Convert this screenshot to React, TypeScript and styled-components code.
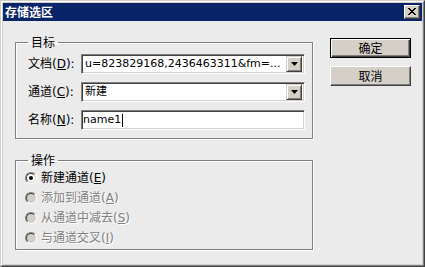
import React from "react";
import styled, { createGlobalStyle } from "styled-components";

const GlobalStyle = createGlobalStyle`
  html, body { margin: 0; padding: 0; background: #ebebeb; }
  body {
    font-family: "DejaVu Sans", "Noto Sans CJK SC", sans-serif;
    font-size: 12px;
    color: #000;
  }
  * { box-sizing: border-box; }
`;

const Window = styled.div`
  width: 425px;
  height: 267px;
  border: 1px solid;
  border-color: #d4d0c8 #404040 #404040 #d4d0c8;
  display: flex;
  flex-direction: column;
`;

const Frame = styled.div`
  flex: 1;
  display: flex;
  flex-direction: column;
  border: 1px solid;
  border-color: #fff #808080 #808080 #fff;
  padding: 1px;
  background: #d4d0c8;
`;

const TitleBar = styled.div`
  height: 18px;
  flex: none;
  background: #0a246a;
  display: flex;
  align-items: center;
  justify-content: space-between;
  padding: 0 2px 0 2px;
`;

const TitleText = styled.span`
  color: #fff;
  font-family: "Noto Sans CJK SC", sans-serif;
  font-weight: bold;
  font-size: 12px;
  line-height: 14px;
`;

const CloseButton = styled.div`
  width: 16px;
  height: 14px;
  background: #d4d0c8;
  border: 1px solid;
  border-color: #fff #404040 #404040 #fff;
  box-shadow: inset -1px -1px 0 #808080;
  display: flex;
  align-items: center;
  justify-content: center;
  padding-right: 1px;
  padding-bottom: 1px;
`;

const Body = styled.div`
  flex: 1;
  background: #ebebeb;
  display: flex;
  align-items: flex-start;
  gap: 17px;
  padding: 14px 11px 0 12px;
`;

const LeftColumn = styled.div`
  width: 298px;
  display: flex;
  flex-direction: column;
  gap: 14px;
`;

const Group = styled.fieldset<{ $pl: number; $pt: number; $pb: number; $pr: number }>`
  margin: 0;
  min-width: 0;
  border: 1px solid #808080;
  box-shadow: inset 1px 1px 0 #fff, 1px 1px 0 #fff;
  padding: ${(p) => `${p.$pt}px ${p.$pr}px ${p.$pb}px ${p.$pl}px`};
`;

const Legend = styled.legend<{ $ml: number }>`
  font-family: "Noto Sans CJK SC", sans-serif;
  font-size: 12px;
  line-height: 14px;
  padding: 0 3px;
  margin-left: ${(p) => p.$ml}px;
`;

const FieldRows = styled.div`
  display: flex;
  flex-direction: column;
  gap: 8px;
`;

const FieldRow = styled.div`
  display: flex;
  align-items: center;
  height: 20px;
`;

const Label = styled.span`
  width: 53px;
  flex: none;
  font-size: 12px;
  line-height: 14px;
  white-space: nowrap;
`;

const Sunken = styled.div<{ $pl: number }>`
  flex: 1;
  height: 20px;
  background: #fff;
  border: 1px solid;
  border-color: #808080 #fff #fff #808080;
  box-shadow: inset 1px 1px 0 #404040, inset -1px -1px 0 #d4d0c8;
  display: flex;
  align-items: center;
  padding: 2px 2px 2px ${(p) => p.$pl}px;
  font-size: 11px;
  line-height: 14px;
  white-space: nowrap;
  overflow: hidden;
`;

const ComboText = styled.span`
  flex: 1;
  overflow: hidden;
`;

const DropButton = styled.div`
  width: 16px;
  height: 16px;
  flex: none;
  background: #d4d0c8;
  border: 1px solid;
  border-color: #d4d0c8 #404040 #404040 #d4d0c8;
  box-shadow: inset 1px 1px 0 #fff, inset -1px -1px 0 #808080;
  display: flex;
  align-items: center;
  justify-content: center;
`;

const Caret = styled.span`
  display: inline-block;
  width: 1px;
  height: 13px;
  background: #000;
  margin-left: 1px;
`;

const RadioRow = styled.div<{ $disabled?: boolean }>`
  height: 20px;
  display: flex;
  align-items: center;
  gap: 4px;
  font-size: 12px;
  line-height: 14px;
  color: ${(p) => (p.$disabled ? "#808080" : "#000")};
  text-shadow: ${(p) => (p.$disabled ? "1px 1px 0 #fff" : "none")};
`;

const RadioOuter = styled.span`
  width: 12px;
  height: 12px;
  border-radius: 50%;
  border: 1px solid;
  border-color: #808080 #fff #fff #808080;
  display: flex;
  flex: none;
`;

const RadioInner = styled.span<{ $disabled?: boolean }>`
  width: 10px;
  height: 10px;
  border-radius: 50%;
  border: 1px solid;
  border-color: #404040 #d4d0c8 #d4d0c8 #404040;
  background: ${(p) => (p.$disabled ? "#d4d0c8" : "#fff")};
  display: flex;
  align-items: center;
  justify-content: center;
`;

const Dot = styled.span`
  width: 4px;
  height: 4px;
  border-radius: 50%;
  background: #000;
`;

const ButtonColumn = styled.div`
  width: 81px;
  padding-top: 3px;
  display: flex;
  flex-direction: column;
  gap: 8px;
`;

const Button = styled.div<{ $default?: boolean }>`
  height: 20px;
  background: #d4d0c8;
  border: 1px solid;
  border-color: ${(p) => (p.$default ? "#000" : "#fff #404040 #404040 #fff")};
  box-shadow: ${(p) =>
    p.$default
      ? "inset 1px 1px 0 #fff, inset -1px -1px 0 #404040, inset -2px -2px 0 #808080"
      : "inset -1px -1px 0 #808080"};
  display: flex;
  align-items: center;
  justify-content: center;
  font-family: "Noto Sans CJK SC", sans-serif;
  font-size: 12px;
  line-height: 14px;
`;

const Arrow = () => (
  <svg width="7" height="4" viewBox="0 0 7 4">
    <path d="M0 0h7L3.5 4z" fill="#000" />
  </svg>
);

const CloseIcon = () => (
  <svg width="8" height="7" viewBox="0 0 8 7" shapeRendering="crispEdges">
    <path
      d="M0 0h2v1h1v1h2V1h1V0h2v1H7v1H6v1H5v1h1v1h1v1h1v1H6V6H5V5H3v1H2v1H0V6h1V5h1V4h1V3H2V2H1V1H0z"
      fill="#000"
    />
  </svg>
);

const Radio = ({ checked, disabled }: { checked?: boolean; disabled?: boolean }) => (
  <RadioOuter>
    <RadioInner $disabled={disabled}>{checked && <Dot />}</RadioInner>
  </RadioOuter>
);

export default function App() {
  return (
    <>
      <GlobalStyle />
      <Window>
        <Frame>
          <TitleBar>
            <TitleText>存储选区</TitleText>
            <CloseButton>
              <CloseIcon />
            </CloseButton>
          </TitleBar>
          <Body>
            <LeftColumn>
              <Group $pl={12} $pt={5} $pb={8} $pr={7}>
                <Legend $ml={0}>目标</Legend>
                <FieldRows>
                  <FieldRow>
                    <Label>
                      文档(<u>D</u>):
                    </Label>
                    <Sunken $pl={3}>
                      <ComboText>u=823829168,2436463311&amp;fm=...</ComboText>
                      <DropButton>
                        <Arrow />
                      </DropButton>
                    </Sunken>
                  </FieldRow>
                  <FieldRow>
                    <Label>
                      通道(<u>C</u>):
                    </Label>
                    <Sunken $pl={3}>
                      <ComboText>新建</ComboText>
                      <DropButton>
                        <Arrow />
                      </DropButton>
                    </Sunken>
                  </FieldRow>
                  <FieldRow>
                    <Label>
                      名称(<u>N</u>):
                    </Label>
                    <Sunken $pl={1}>
                      name1
                      <Caret />
                    </Sunken>
                  </FieldRow>
                </FieldRows>
              </Group>
              <Group $pl={9} $pt={1} $pb={1} $pr={7}>
                <Legend $ml={3}>操作</Legend>
                <RadioRow>
                  <Radio checked />
                  <span>
                    新建通道(<u>E</u>)
                  </span>
                </RadioRow>
                <RadioRow $disabled>
                  <Radio disabled />
                  <span>
                    添加到通道(<u>A</u>)
                  </span>
                </RadioRow>
                <RadioRow $disabled>
                  <Radio disabled />
                  <span>
                    从通道中减去(<u>S</u>)
                  </span>
                </RadioRow>
                <RadioRow $disabled>
                  <Radio disabled />
                  <span>
                    与通道交叉(<u>I</u>)
                  </span>
                </RadioRow>
              </Group>
            </LeftColumn>
            <ButtonColumn>
              <Button $default>确定</Button>
              <Button>取消</Button>
            </ButtonColumn>
          </Body>
        </Frame>
      </Window>
    </>
  );
}
